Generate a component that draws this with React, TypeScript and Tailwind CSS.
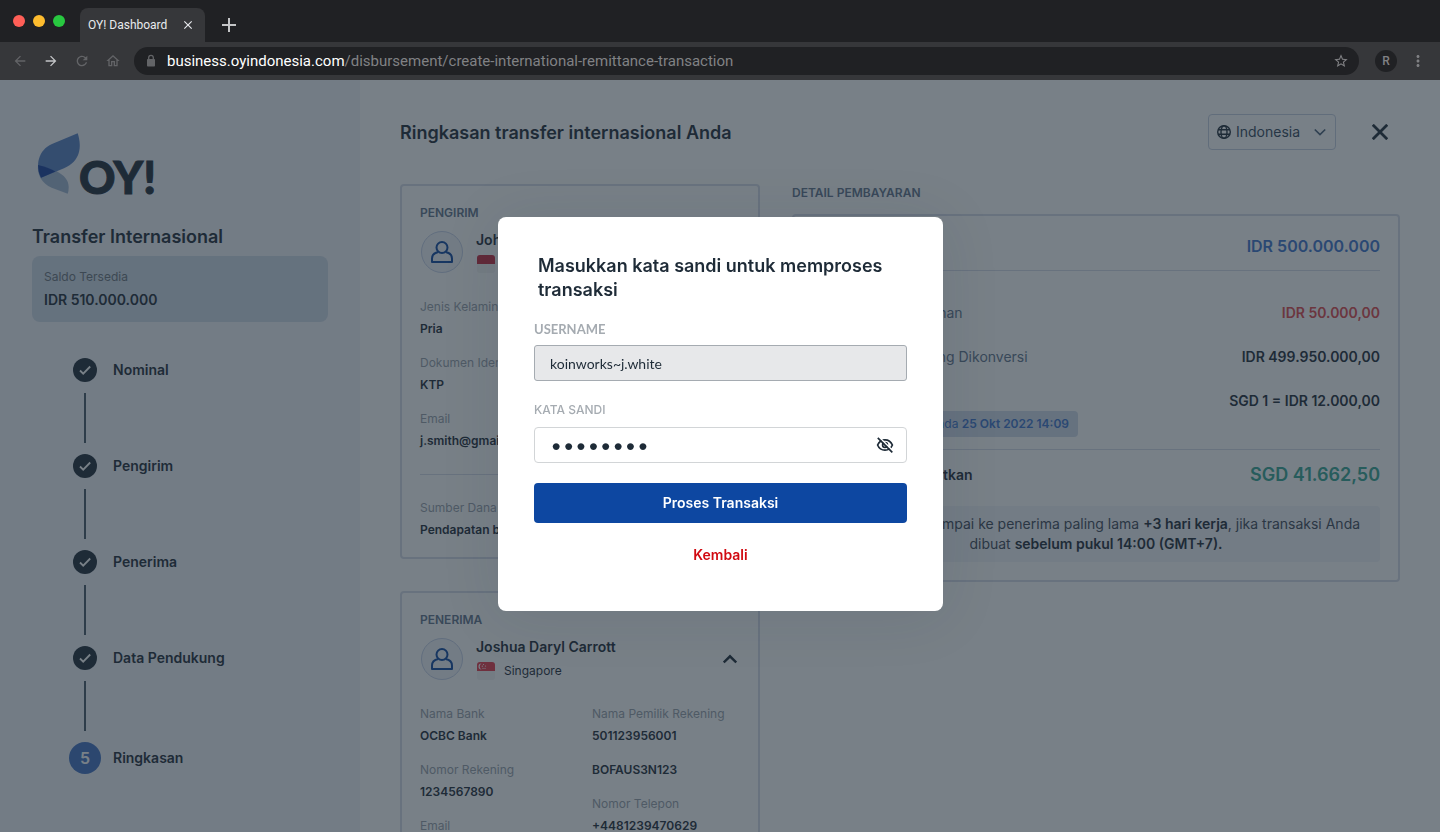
import React from "react";
import {
  MdArrowBack,
  MdArrowForward,
  MdClose,
  MdMoreVert,
  MdOutlineHome,
  MdRefresh,
  MdStarBorder,
} from "react-icons/md";

function BrowserChrome() {
  return (
    <header className="shrink-0 font-[Roboto,sans-serif]">
      <div className="flex h-[42px] items-end bg-[#202124]">
        <div className="flex gap-2 self-center pl-[13px]">
          <span className="size-3 rounded-full bg-[#ff5f57]" />
          <span className="size-3 rounded-full bg-[#febc2e]" />
          <span className="size-3 rounded-full bg-[#28c840]" />
        </div>
        <div className="ml-[15px] flex h-[34px] w-[125px] items-center justify-between rounded-t-lg bg-[#36373a] px-2">
          <span className="text-xs text-[#e8eaed]">OY! Dashboard</span>
          <button type="button" aria-label="Tutup tab" className="flex size-[18px] items-center justify-center text-[#e8eaed]">
            <MdClose className="size-3.5" />
          </button>
        </div>
        <button type="button" aria-label="Tab baru" className="ml-4 flex h-[34px] w-4 items-center justify-center text-[#c4c5c7]">
          <svg viewBox="0 0 14 14" className="size-3.5 shrink-0" stroke="currentColor" strokeWidth="2">
            <path d="M7 0v14M0 7h14" />
          </svg>
        </button>
      </div>
      <div className="flex h-[38px] items-center bg-[#36373a]">
        <nav className="flex w-[134px] items-center gap-[15px] pl-3 text-[#636467]">
          <button type="button" aria-label="Kembali ke halaman sebelumnya"><MdArrowBack className="size-4" /></button>
          <button type="button" aria-label="Maju" className="text-[#c4c5c7]"><MdArrowForward className="size-4" /></button>
          <button type="button" aria-label="Muat ulang"><MdRefresh className="size-4" /></button>
          <button type="button" aria-label="Beranda"><MdOutlineHome className="size-4" /></button>
        </nav>
        <div className="flex h-7 flex-1 items-center rounded-full bg-[#202124] px-2.5">
          <svg viewBox="0 0 14 14" className="size-3.5 text-[#636467]" fill="none" stroke="currentColor" strokeWidth="1.300">
            <rect x="3" y="5" width="8" height="7.500" rx=".8" fill="currentColor" stroke="none" />
            <path d="M4.700 5.500V3.600a2.300 2.300 0 0 1 4.600 0v1.900" />
          </svg>
          <p className="ml-[9px] flex-1 text-[15px] text-[#808184]">
            <span className="text-white">business.oyindonesia.com</span>
            /disbursement/create-international-remittance-transaction
          </p>
          <button type="button" aria-label="Simpan halaman"><MdStarBorder className="size-4 text-[#808184]" /></button>
        </div>
        <div className="flex w-[81px] items-center gap-3 pl-4">
          <span className="flex size-[22px] items-center justify-center rounded-full bg-[#202124] text-xs font-medium text-[#808184]">R</span>
          <button type="button" aria-label="Menu peramban"><MdMoreVert className="size-[18px] text-[#808184]" /></button>
        </div>
      </div>
    </header>
  );
}

function Logo() {
  return (
    <svg viewBox="0 0 128 82" className="h-[82px] w-32" role="img" aria-label="OY!">
      <path d="M6 37C16 39 37 45 36.700 59Q36.700 63 35.700 65.700L19.700 59.700C10 55.500 5 47 6 37Z" fill="#a0b6d2" />
      <path d="M45.700 5.300C50 19 48.500 33 32 40.300L9 49.700C3 38 6 22 20 16Z" fill="#557fc4" />
      <path d="M6 37Q16 39 23.500 43.500L9 49.700Q6 44 6 37Z" fill="#183f9f" />
      <text x="47" y="66" fontSize="45" fontWeight="900" fill="#1e2b37" stroke="#1e2b37" fontFamily="Lato, sans-serif">OY!</text>
    </svg>
  );
}

const doneSteps = ["Nominal", "Pengirim", "Penerima", "Data Pendukung"];

function Sidebar() {
  return (
    <aside className="w-[360px] shrink-0 bg-[#f2f4fa] px-8 pt-12">
      <Logo />
      <h2 className="mt-[15px] text-lg leading-6 font-semibold">Transfer Internasional</h2>
      <div className="mt-[7px] rounded-lg bg-[#d0dbe8] px-3 pt-[11px] pb-3">
        <p className="text-xs leading-5 text-[#6b747d]">Saldo Tersedia</p>
        <p className="mt-[3px] text-sm leading-5 font-semibold">IDR 510.000.000</p>
      </div>
      <ol className="mt-9 pl-[37px] text-sm font-semibold">
        {doneSteps.map((step) => (
          <li key={step}>
            <div className="flex items-center gap-3">
              <span className="flex w-8 justify-center">
                <svg viewBox="0 0 24 24" className="size-6">
                  <circle cx="12" cy="12" r="12" fill="#1e2b37" />
                  <path d="M7 12.500l3.200 3.200L17.200 8.500" fill="none" stroke="#fff" strokeWidth="1.800" />
                </svg>
              </span>
              {step}
            </div>
            <div className="my-[11px] ml-[15px] h-[50px] w-0.5 bg-[#475767]" />
          </li>
        ))}
        <li className="flex items-center gap-3" aria-current="step">
          <span className="flex size-8 items-center justify-center rounded-full bg-[#4172c4] text-base text-white">5</span>
          Ringkasan
        </li>
      </ol>
    </aside>
  );
}

function Avatar() {
  return (
    <span className="ml-px flex size-[42px] shrink-0 items-center justify-center rounded-full border border-[#c6d1e8] bg-[#f2f4fa]">
      <svg viewBox="0 0 24 24" className="size-6" fill="none" stroke="#0d47a1" strokeWidth="2">
        <circle cx="12" cy="7.500" r="5.500" />
        <path d="M8.300 12C4.500 12.800 2 15 2 18.500V22H22V18.500C22 15 19.500 12.800 15.700 12" strokeLinejoin="round" />
      </svg>
    </span>
  );
}

function Flag({ stars = false }: { stars?: boolean }) {
  return (
    <svg viewBox="0 0 20 20" className="size-5 shrink-0">
      <rect x="1" y="1" width="18" height="18" rx="3" fill="#f4f4f4" />
      <path d="M1 10V4a3 3 0 0 1 3-3h12a3 3 0 0 1 3 3v6z" fill={stars ? "#e8384a" : "#c8283e"} />
      {stars && (
        <g fill="#fff">
          <path d="M5.500 2.500a3 3 0 1 0 0 6a3.400 3.400 0 0 1 0-6z" />
          <circle cx="7.500" cy="3.500" r=".6" />
          <circle cx="9.500" cy="5" r=".6" />
          <circle cx="6.300" cy="5.200" r=".6" />
          <circle cx="7" cy="7.300" r=".6" />
          <circle cx="9" cy="7.300" r=".6" />
        </g>
      )}
    </svg>
  );
}

type Entry = { label?: string; value: string };

function Entries({ items }: { items: Entry[] }) {
  return (
    <dl className="flex flex-col gap-3.5 text-xs leading-5">
      {items.map((item) => (
        <div key={item.value} className="flex flex-col gap-0.5">
          {item.label && <dt className="whitespace-nowrap text-[#98a1ab]">{item.label}</dt>}
          <dd className="font-semibold">{item.value}</dd>
        </div>
      ))}
    </dl>
  );
}

function PartyCard(props: {
  title: string;
  name: string;
  country: string;
  stars?: boolean;
  left: Entry[];
  right?: Entry[];
  footer?: Entry[];
}) {
  return (
    <section className="rounded border-2 border-[#d7dce8] px-[18px] pt-[19px] pb-[17px]">
      <h3 className="text-xs leading-4 font-semibold text-[#61748c]">{props.title}</h3>
      <div className="mt-[9px] flex items-center">
        <Avatar />
        <div className="ml-[13px] flex-1">
          <p className="text-sm leading-5 font-semibold">{props.name}</p>
          <p className="mt-1 flex items-center gap-2 text-xs leading-5">
            <Flag stars={props.stars} />
            {props.country}
          </p>
        </div>
        <button type="button" aria-label="Ciutkan" className="mr-[3px]">
          <svg viewBox="0 0 14 14" className="size-3.5" fill="none" stroke="#1e2b37" strokeWidth="2.400">
            <path d="M.8 10.500L7 4.300l6.200 6.200" />
          </svg>
        </button>
      </div>
      <div className="mt-[23px] grid grid-cols-2 gap-6">
        <Entries items={props.left} />
        {props.right && <Entries items={props.right} />}
      </div>
      {props.footer && (
        <div className="mt-[23px] border-t border-[#d7dce8] pt-[23px]">
          <Entries items={props.footer} />
        </div>
      )}
    </section>
  );
}

function PaymentDetail() {
  return (
    <section className="flex-1">
      <h3 className="pt-px text-xs leading-4 font-semibold text-[#61748c]">DETAIL PEMBAYARAN</h3>
      <div className="mt-[13px] rounded border-2 border-[#d7dce8] p-[18px] text-sm leading-5">
        <div className="flex justify-between border-b border-[#d7dce8] pt-0.5 pb-3.5 font-semibold">
          <span>Jumlah Transfer</span>
          <span className="text-base leading-5 text-[#3e74cc]">IDR 500.000.000</span>
        </div>
        <div className="flex flex-col gap-6 pt-8 text-[#61748c]">
          <div className="flex justify-between">
            <span>Total Biaya Pengiriman</span>
            <span className="font-semibold text-[#e0474c]">IDR 50.000,00</span>
          </div>
          <div className="flex justify-between">
            <span>Jumlah Nominal yang Dikonversi</span>
            <span className="font-semibold text-[#1e2b37]">IDR 499.950.000,00</span>
          </div>
          <div className="flex justify-between">
            <span>Nilai Tukar</span>
            <span className="font-semibold text-[#1e2b37]">SGD 1 = IDR 12.000,00</span>
          </div>
        </div>
        <p className="w-[266px] rounded bg-[#d3dceb] px-[9px] py-[3px] text-right text-xs leading-5 text-[#3e74cc]">
          Kurs diperbarui pada <b className="font-semibold">25 Okt 2022 14:09</b>
        </p>
        <div className="mt-3 flex items-center justify-between border-t border-[#d7dce8] pt-[13px] font-semibold">
          <span>Penerima Mendapatkan</span>
          <span className="text-lg leading-6 text-[#35a593]">SGD 41.662,50</span>
        </div>
        <p className="mt-[19px] rounded bg-[#f2f4fa] py-2 text-center text-[#3f4a57]">
          Transfer akan sampai ke penerima paling lama <b className="font-semibold text-[#1e2b37]">+3 hari kerja</b>, jika transaksi Anda
          <br />
          dibuat <b className="font-semibold text-[#1e2b37]">sebelum pukul 14:00 (GMT+7).</b>
        </p>
      </div>
    </section>
  );
}

function PasswordDialog() {
  return (
    <div className="fixed inset-0 flex items-center justify-center pb-1 pl-px">
      <form
        role="dialog"
        aria-modal="true"
        aria-labelledby="dialog-title"
        onSubmit={(event) => event.preventDefault()}
        className="flex w-[445px] flex-col rounded-lg bg-white px-9 pt-[37px] pb-[46px] shadow-[0_4px_60px_rgba(30,43,55,0.1)]"
      >
        <h2 id="dialog-title" className="px-1 text-lg leading-6 font-semibold">
          Masukkan kata sandi untuk memproses transaksi
        </h2>
        <label htmlFor="username" className="mt-[19px] font-[Lato,sans-serif] text-[13px] leading-4 font-bold text-[#a5abb1]">
          USERNAME
        </label>
        <input
          id="username"
          readOnly
          defaultValue="koinworks~j.white"
          className="mt-2 h-9 rounded-[3px] border border-[#a5abb1] bg-[#e7e8ea] px-[15px] font-[Lato,sans-serif] text-sm outline-none"
        />
        <label htmlFor="password" className="mt-[21px] text-xs leading-4 font-medium text-[#a5abb1]">
          KATA SANDI
        </label>
        <div className="mt-[9px] flex h-9 items-center rounded border border-[#d2d5d7] pr-3 pl-[15px]">
          <input id="password" type="password" defaultValue="oyrahasi" className="h-8 min-w-0 flex-1 text-[22px] outline-none" />
          <button type="button" aria-label="Tampilkan kata sandi">
            <svg viewBox="0 0 18 18" className="size-[18px]" fill="none" stroke="#1e2b37" strokeWidth="1.700">
              <path d="M1.600 9C3 5.600 5.700 3.800 9 3.800S15 5.600 16.400 9C15 12.400 12.300 14.200 9 14.200S3 12.400 1.600 9Z" />
              <circle cx="9" cy="9" r="2.400" />
              <path d="M3.200 1.200L17.500 15.500" stroke="#fff" strokeWidth="1.600" />
              <path d="M1.800 1.800L16.300 16.300" />
            </svg>
          </button>
        </div>
        <button type="submit" className="mt-5 h-10 rounded bg-[#0d47a1] text-sm font-semibold text-white">
          Proses Transaksi
        </button>
        <button type="button" className="mt-[22px] self-center text-sm leading-5 font-semibold text-[#d10a11]">
          Kembali
        </button>
      </form>
    </div>
  );
}

export default function App() {
  return (
    <div className="flex h-screen flex-col overflow-hidden font-[Inter,sans-serif] text-[#1e2b37]">
      <BrowserChrome />
      <div className="relative flex min-h-0 flex-1 overflow-hidden bg-white">
        <Sidebar />
        <main className="flex-1 px-10 pt-[34px]">
          <div className="flex h-9 items-center">
            <h1 className="flex-1 pt-0.5 text-lg font-semibold">Ringkasan transfer internasional Anda</h1>
            <div className="flex h-9 w-32 items-center rounded border border-[#c6d0e0] px-2 text-[#33475b]">
              <svg viewBox="0 0 14 14" className="size-3.5 shrink-0" fill="none" stroke="#1e2b37" strokeWidth="1.400">
                <circle cx="7" cy="7" r="6.300" />
                <ellipse cx="7" cy="7" rx="3" ry="6.300" />
                <path d="M1 4.800h12M1 9.200h12" />
              </svg>
              <select aria-label="Bahasa" className="ml-[5px] flex-1 appearance-none text-sm outline-none">
                <option>Indonesia</option>
                <option>English</option>
              </select>
              <svg viewBox="0 0 14 14" className="size-3.5 shrink-0" fill="none" stroke="#4a6078" strokeWidth="1.700">
                <path d="M1.800 4.500L7 9.500l5.200-5" />
              </svg>
            </div>
            <button type="button" aria-label="Tutup" className="ml-6 flex size-10 items-center justify-center">
              <svg viewBox="0 0 16 16" className="size-4" stroke="#1e2b37" strokeWidth="2.800">
                <path d="M.8.8l14.400 14.400M15.200.8L.8 15.200" />
              </svg>
            </button>
          </div>
          <div className="mt-[34px] flex items-start gap-8">
            <div className="flex w-[360px] shrink-0 flex-col gap-8">
              <PartyCard
                title="PENGIRIM"
                name="John Smith"
                country="Indonesia"
                left={[
                  { label: "Jenis Kelamin", value: "Pria" },
                  { label: "Dokumen Identitas", value: "KTP" },
                  { label: "Email", value: "j.smith@gmail.com" },
                ]}
                footer={[{ label: "Sumber Dana", value: "Pendapatan bisnis" }]}
              />
              <PartyCard
                title="PENERIMA"
                name="Joshua Daryl Carrott"
                country="Singapore"
                stars
                left={[
                  { label: "Nama Bank", value: "OCBC Bank" },
                  { label: "Nomor Rekening", value: "1234567890" },
                  { label: "Email", value: "joshua@gmail.com" },
                ]}
                right={[
                  { label: "Nama Pemilik Rekening", value: "501123956001" },
                  { value: "BOFAUS3N123" },
                  { label: "Nomor Telepon", value: "+4481239470629" },
                ]}
              />
            </div>
            <PaymentDetail />
          </div>
        </main>
        <div className="absolute inset-0 bg-[#1e2b37]/60" />
      </div>
      <PasswordDialog />
    </div>
  );
}
